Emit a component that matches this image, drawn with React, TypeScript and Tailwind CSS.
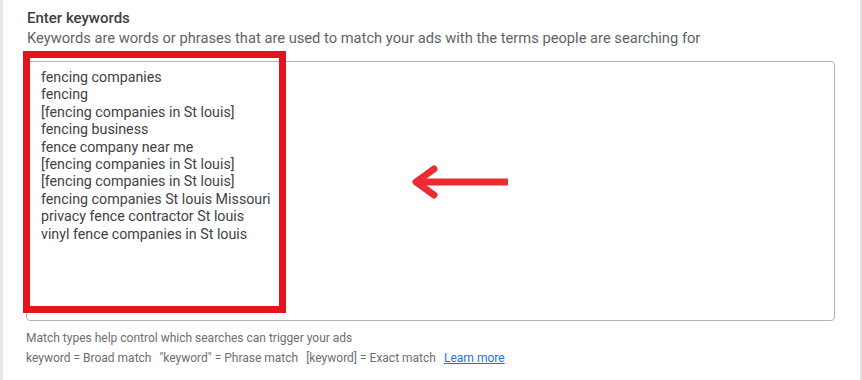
import React from 'react';

const keywords = [
  'fencing companies',
  'fencing',
  '[fencing companies in St louis]',
  'fencing business',
  'fence company near me',
  '[fencing companies in St louis]',
  '[fencing companies in St louis]',
  'fencing companies St louis Missouri',
  'privacy fence contractor St louis',
  'vinyl fence companies in St louis',
];

const ArrowLeft: React.FC = () => (
  <svg width="104" height="36" viewBox="0 0 104 36" className="absolute left-[383px] top-[102px]">
    <g fill="none" stroke="#ec2b33" strokeWidth="7" strokeLinecap="round" strokeLinejoin="round">
      <path d="M6 18 H98" strokeLinecap="butt" />
      <path d="M24 5 L6 18 L24 31" />
    </g>
  </svg>
);

export default function App() {
  return (
    <div
      className="w-[862px] h-[380px] bg-white border-l-[3px] border-r-2 border-l-[#e6e8ea] border-r-[#e2e2e2] overflow-hidden"
      style={{ fontFamily: 'Roboto, "Liberation Sans", sans-serif' }}
    >
      <div className="pl-[23px] pt-2">
        <h2 className="ml-px text-[15px] leading-5 font-medium text-[#3c4043]">Enter keywords</h2>
        <p className="ml-px text-[14.7px] leading-5 text-[#5f6368]">
          Keywords are words or phrases that are used to match your ads with the terms people are searching for
        </p>

        <div className="relative mt-[13px] w-[809px] h-[260px] border border-[#b4b4b4] rounded-[4px]">
          <div className="pt-[7px] pl-[14px] text-[14.25px] leading-[17.4px] text-[#404346]">
            {keywords.map((k, i) => (
              <div key={i}>{k}</div>
            ))}
          </div>
          <div className="absolute -left-[4px] -top-[11px] w-[263px] h-[262px] border-[7px] border-[#e3141c]" />
          <ArrowLeft />
        </div>

        <div className="mt-2 text-[12px] leading-[18px] text-[#6b6f73]">
          <p>Match types help control which searches can trigger your ads</p>
          <p className="mt-[2px] flex gap-[8px]">
            <span>keyword = Broad match</span>
            <span>"keyword" = Phrase match</span>
            <span>[keyword] = Exact match</span>
            <a className="text-[#1a73e8] underline">Learn more</a>
          </p>
        </div>
      </div>
    </div>
  );
}
